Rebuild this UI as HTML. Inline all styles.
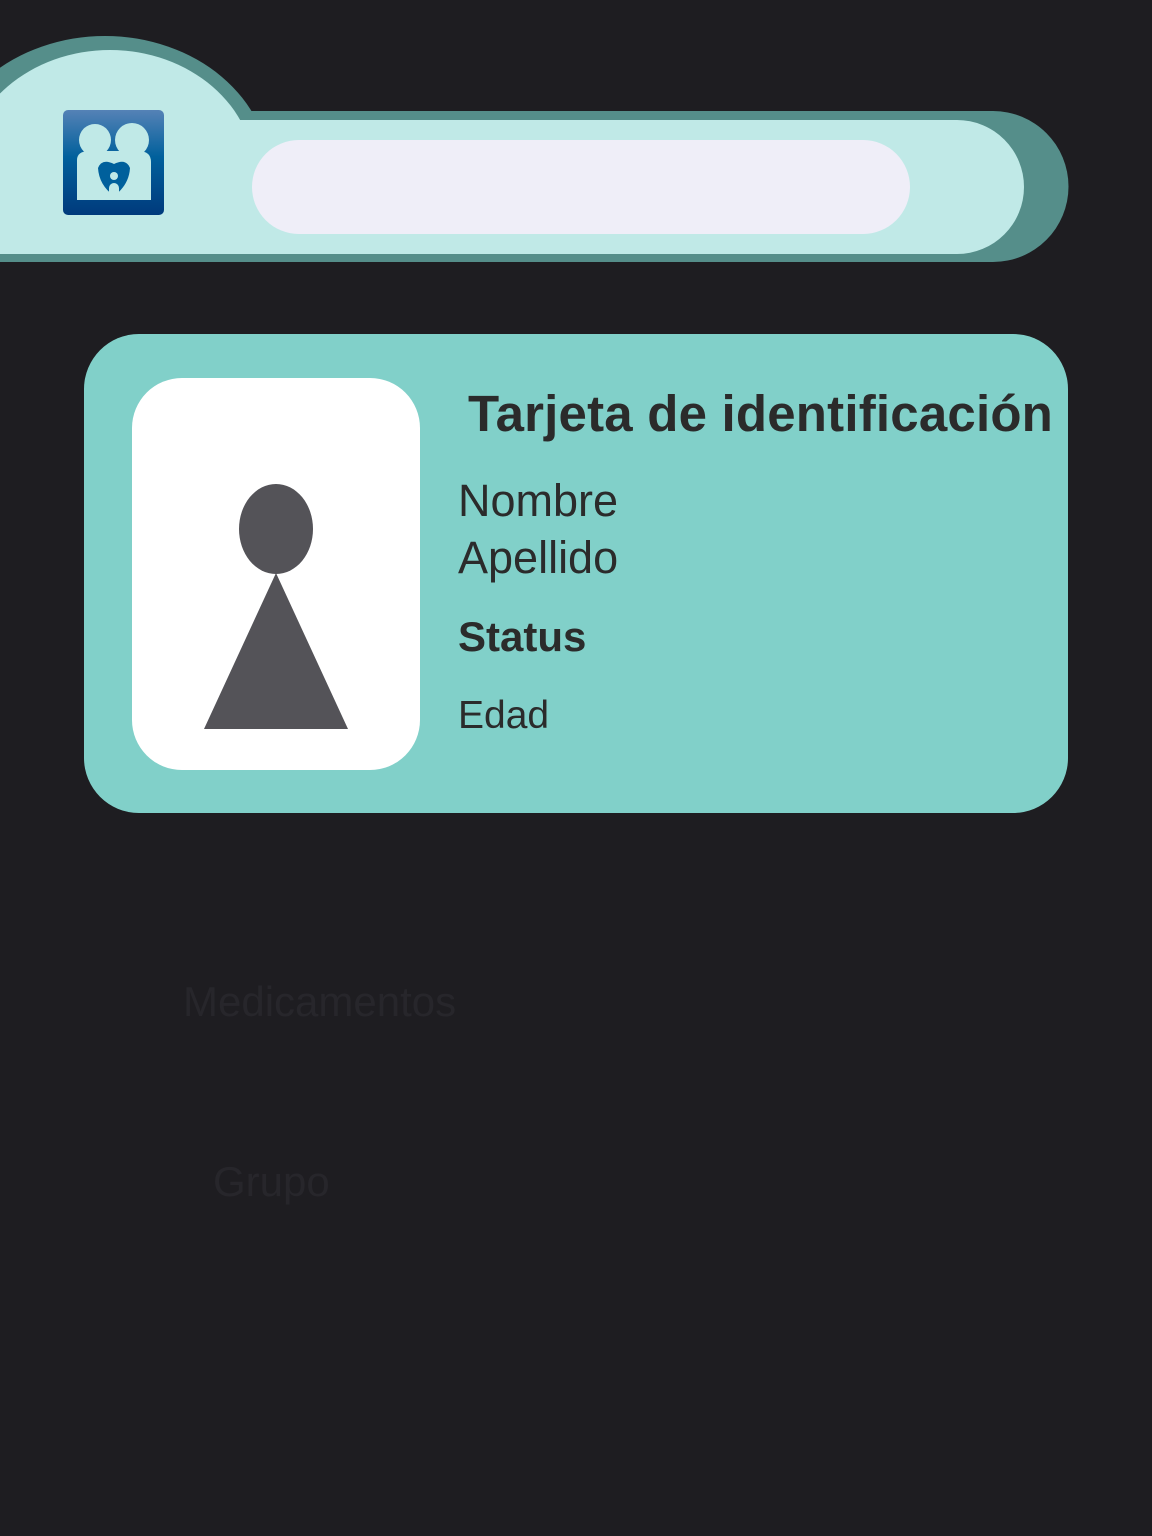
<!DOCTYPE html>
<html><head><meta charset="utf-8"><style>
html,body{margin:0;padding:0;background:#1e1d21;width:1152px;height:1536px;overflow:hidden;font-family:"Liberation Sans",sans-serif;}
.abs{position:absolute}
</style></head><body>
<svg class="abs" style="left:0;top:0" width="1152" height="300">
<defs>
<clipPath id="top1"><rect x="0" y="0" width="400" height="150"/></clipPath>
<linearGradient id="lg" x1="0" y1="0" x2="0" y2="1"><stop offset="0" stop-color="#5582b6"/><stop offset="0.45" stop-color="#00609c"/><stop offset="1" stop-color="#003a7c"/></linearGradient>
</defs>
<ellipse cx="105" cy="175" rx="165" ry="139" fill="#558e8a" clip-path="url(#top1)"/>
<path d="M0 111 H993 A75.5 75.5 0 0 1 993 262 H0 Z" fill="#558e8a"/>
<ellipse cx="110" cy="175" rx="145" ry="125" fill="#c0e9e7" clip-path="url(#top1)"/>
<path d="M0 120 H957 A67 67 0 0 1 957 254 H0 Z" fill="#c0e9e7"/>
<rect x="252" y="140" width="658" height="94" rx="47" fill="#efeef8"/>
<rect x="63" y="110" width="101" height="105" rx="5" fill="url(#lg)"/>
<circle cx="95" cy="140" r="16" fill="#c0e9e7"/>
<circle cx="132" cy="140" r="17" fill="#c0e9e7"/>
<path d="M77 200 V160 Q77 151 90 151 H138 Q151 151 151 162 V200 Z" fill="#c0e9e7"/>
<path d="M114 196 Q99 185 98 168 Q102 158 114 164 Q126 158 130 168 Q129 185 114 196Z" fill="#00609c"/>
<circle cx="114" cy="176" r="4" fill="#c0e9e7"/>
<rect x="109" y="183" width="10" height="16" rx="5" fill="#c0e9e7"/>
</svg>
<div class="abs" style="left:84px;top:334px;width:984px;height:479px;border-radius:55px;background:#81d0c9"></div>
<div class="abs" style="left:132px;top:378px;width:288px;height:392px;border-radius:50px;background:#fff"></div>
<svg class="abs" style="left:0;top:0" width="1152" height="800">
<ellipse cx="276" cy="529" rx="37" ry="45" fill="#545358"/>
<polygon points="276,573 204,729 348,729" fill="#545358"/>
</svg>
<div class="abs" style="left:468px;top:384px;font-size:51px;font-weight:bold;color:#2b2b2b;white-space:nowrap;letter-spacing:0.2px">Tarjeta de identificación</div>
<div class="abs" style="left:458px;top:472px;font-size:45px;color:#2b2b2b;line-height:57px">Nombre<br>Apellido</div>
<div class="abs" style="left:458px;top:613px;font-size:42px;font-weight:bold;color:#2b2b2b">Status</div>
<div class="abs" style="left:458px;top:694px;font-size:39px;color:#2b2b2b">Edad</div>
<div class="abs" style="left:183px;top:978px;font-size:42px;color:#27262b">Medicamentos</div>
<div class="abs" style="left:213px;top:1158px;font-size:42px;color:#27262b">Grupo</div>
</body></html>
